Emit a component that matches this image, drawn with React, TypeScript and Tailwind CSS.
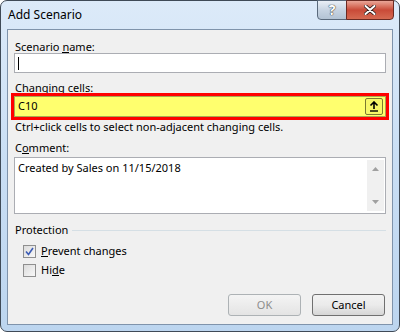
import React from 'react';

const font = { fontFamily: '"Noto Sans", "Open Sans", sans-serif' };

const U = ({ children }: { children: React.ReactNode }) => (
  <span className="inline-block border-b border-black leading-[11px]">{children}</span>
);

const Check = ({ checked }: { checked?: boolean }) => (
  <span className="w-[13px] h-[13px] border border-[#8f8f8f] bg-gradient-to-br from-[#dcdcdc] to-[#f8f8f8] flex items-center justify-center">
    {checked && (
      <svg width="9" height="9" viewBox="0 0 9 9">
        <path d="M1 4.5 L3.5 7.5 L8 1" fill="none" stroke="#3b5bb5" strokeWidth="1.6" />
      </svg>
    )}
  </span>
);

export default function App() {
  return (
    <div className="w-[400px] h-[332px] bg-white" style={font}>
      <div className="relative w-full h-full rounded-[7px] border border-[#3f4a57] bg-gradient-to-b from-[#dceaf9] via-[#c9def4] to-[#bcd5ef] flex flex-col">
        {/* title bar */}
        <div className="h-[28px] pl-[7px] flex items-center text-[12px] text-black">Add Scenario</div>
        <div className="absolute top-[-1px] left-[316px] w-[30px] h-[20px] rounded-bl-[4px] border border-[#5a6a7c] bg-gradient-to-b from-[#e9eff6] via-[#c7d4e2] to-[#b3c3d4] flex items-center justify-center">
          <span className="text-white font-bold text-[14px] leading-none" style={{ textShadow: '0 0 1px #222, 0 0 1px #222' }}>?</span>
        </div>
        <div className="absolute top-[-1px] left-[345px] w-[48px] h-[20px] rounded-br-[4px] border border-[#6b2a22] bg-gradient-to-b from-[#e9a597] via-[#c94a38] to-[#d56a52] flex items-center justify-center">
          <svg width="12" height="10" viewBox="0 0 12 10">
            <path d="M1.5 1 L10.5 9 M10.5 1 L1.5 9" stroke="#2a1a18" strokeWidth="3.6" strokeLinecap="round" />
            <path d="M1.5 1 L10.5 9 M10.5 1 L1.5 9" stroke="#ffffff" strokeWidth="2" strokeLinecap="round" />
          </svg>
        </div>

        {/* client area */}
        <div className="mx-[6px] h-[296px] border border-[#7f93ab] bg-[#f0f0f0] text-[11px] text-black px-[6px] flex flex-col">
          <div className="h-[14px] mt-[10px] leading-[14px] pl-[1px]">
            Scenario <U>n</U>ame:
          </div>
          <div className="mt-[-1px] h-[20px] bg-white border border-[#abadb3] flex items-center pl-[3px]">
            <span className="w-px h-[13px] bg-black" />
          </div>
          <div className="h-[14px] mt-[8px] leading-[14px] pl-[1px]">Changing cells:</div>
          <div className="mt-[-2px] mx-[-3px] h-[27px] border-[3px] border-[#ff0000]">
            <div className="h-full bg-[#ffff6e] border border-[#a9a852] flex items-center pl-[3px] pr-[2px]">
              <span className="flex-1">C10</span>
              <div className="w-[18px] h-[17px] rounded-[2px] border border-[#7b7a30] bg-[#f7f768] flex items-center justify-center">
                <svg width="10" height="11" viewBox="0 0 10 11">
                  <path d="M5 1 L5 8 M1.5 4.5 L5 1 L8.5 4.5" fill="none" stroke="#000" strokeWidth="1.6" />
                  <path d="M1 10 L9 10" stroke="#000" strokeWidth="1.4" />
                </svg>
              </div>
            </div>
          </div>
          <div className="h-[14px] mt-[0px] leading-[14px] pl-[1px]">Ctrl+click cells to select non-adjacent changing cells.</div>
          <div className="h-[14px] mt-[7px] leading-[14px] pl-[1px]">
            C<U>o</U>mment:
          </div>
          <div className="mt-[2px] h-[57px] bg-white border border-[#abadb3] flex">
            <div className="flex-1 pl-[3px] pt-[2px] leading-[16px]">Created by Sales on 11/15/2018</div>
            <div className="w-[17px] my-[2px] mr-[1px] bg-[#f0f0f0] flex flex-col justify-between items-center py-[7px]">
              <svg width="7" height="4" viewBox="0 0 7 4"><path d="M0 4 L3.5 0 L7 4 Z" fill="#a0a0a0" /></svg>
              <svg width="7" height="4" viewBox="0 0 7 4"><path d="M0 0 L3.5 4 L7 0 Z" fill="#a0a0a0" /></svg>
            </div>
          </div>
          <div className="h-[14px] mt-[9px] flex items-center gap-[4px] pl-[1px]">
            <span className="leading-[14px]">Protection</span>
            <span className="flex-1 h-px bg-[#d5dfe5] mt-[1px]" />
          </div>
          <div className="mt-[7px] h-[14px] flex items-center gap-[5px] pl-[9px]">
            <Check checked />
            <span className="leading-[14px]"><U>P</U>revent changes</span>
          </div>
          <div className="mt-[5px] h-[14px] flex items-center gap-[5px] pl-[9px]">
            <Check />
            <span className="leading-[14px]">Hi<U>d</U>e</span>
          </div>
          <div className="mt-[17px] flex justify-end gap-[11px] pr-[1px]">
            <button className="w-[73px] h-[22px] rounded-[3px] border border-[#adb2b5] bg-gradient-to-b from-[#f4f4f4] to-[#e4e4e4] text-[#8d8d8d]">OK</button>
            <button className="w-[73px] h-[22px] rounded-[3px] border border-[#707070] bg-gradient-to-b from-[#f2f2f2] via-[#ebebeb] to-[#d6d6d6] text-black">Cancel</button>
          </div>
        </div>
      </div>
    </div>
  );
}
